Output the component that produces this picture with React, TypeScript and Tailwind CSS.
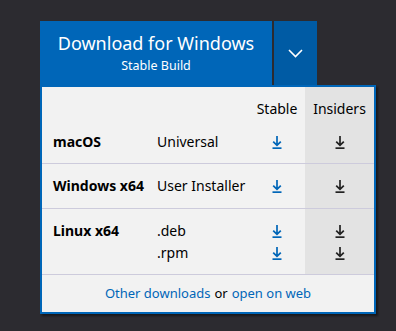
import React from 'react';

const font = { fontFamily: '"Segoe UI", "Noto Sans", "Open Sans", sans-serif' };

function DownloadIcon({ insiders }: { insiders?: boolean }) {
  return (
    <svg
      width="10"
      height="13"
      viewBox="0 0 10 13"
      className={insiders ? 'text-[#222222]' : 'text-[#0066b8]'}
      fill="none"
      stroke="currentColor"
      strokeWidth="1.7"
    >
      <path d="M5 0v9.5M1.2 5.6L5 9.4l3.8-3.8" />
      <path d="M0.5 12.2h9" strokeWidth="1.8" />
    </svg>
  );
}

const rows = [
  { os: 'macOS', builds: ['Universal'], pad: 'pt-[11px]', h: 'h-[43px]' },
  { os: 'Windows x64', builds: ['User Installer'], pad: 'pt-3', h: 'h-[45px]' },
  { os: 'Linux x64', builds: ['.deb', '.rpm'], pad: 'pt-[11px]', h: 'h-[66px]' },
];

export default function App() {
  return (
    <div className="min-h-[331px] w-[396px] bg-[#2c2b30] pl-10 pt-[21px]" style={font}>
      {/* Button row */}
      <div className="flex h-16 gap-[2px]">
        <button className="flex w-[232px] flex-col items-center justify-center bg-[#0066b8] pt-[2px] text-white">
          <span className="text-[18px] leading-6">Download for Windows</span>
          <span className="text-[12.5px] leading-[22px]">Stable Build</span>
        </button>
        <button className="flex w-[43px] items-center justify-center bg-[#005ba4] text-white">
          <svg width="15" height="9" viewBox="0 0 15 9" fill="none" stroke="currentColor" strokeWidth="1.6">
            <path d="M1 1l6.5 6.5L14 1" />
          </svg>
        </button>
      </div>

      {/* Dropdown panel */}
      <div className="w-[336px] border-2 border-[#0066b8] bg-[#f2f2f2] text-[14px] text-black shadow-[2px_2px_2px_rgba(0,0,0,0.45)]">
        <div className="grid grid-cols-[11px_104px_92px_56px_69px]">
          <div />
          <div />
          <div />
          <div className="pt-3 pb-[2px] text-center leading-5">Stable</div>
          <div className="bg-[#e3e3e3] pt-3 pb-[2px] text-center leading-5">Insiders</div>
        </div>
        {rows.map((row) => {
          const multi = row.builds.length > 1;
          const line = multi ? 'h-[22px] leading-[22px]' : 'h-5 leading-5';
          return (
            <div
              key={row.os}
              className={`grid grid-cols-[11px_104px_92px_56px_69px] border-b border-[#cdcbdc] ${row.h}`}
            >
              <div />
              <div className={`font-bold ${row.pad}`}>
                <div className={line}>{row.os}</div>
              </div>
              <div className={row.pad}>
                {row.builds.map((b) => (
                  <div key={b} className={line}>{b}</div>
                ))}
              </div>
              <div className={row.pad}>
                {row.builds.map((b) => (
                  <div key={b} className={`flex items-center justify-center ${line}`}>
                    <DownloadIcon />
                  </div>
                ))}
              </div>
              <div className={`bg-[#e3e3e3] ${row.pad}`}>
                {row.builds.map((b) => (
                  <div key={b} className={`flex items-center justify-center ${line}`}>
                    <DownloadIcon insiders />
                  </div>
                ))}
              </div>
            </div>
          );
        })}
        <div className="flex h-[37px] items-center justify-center text-[13px]">
          <span className="text-[#0066b8]">Other downloads</span>
          <span className="px-[4px]">or</span>
          <span className="text-[#0066b8]">open on web</span>
        </div>
      </div>
    </div>
  );
}
